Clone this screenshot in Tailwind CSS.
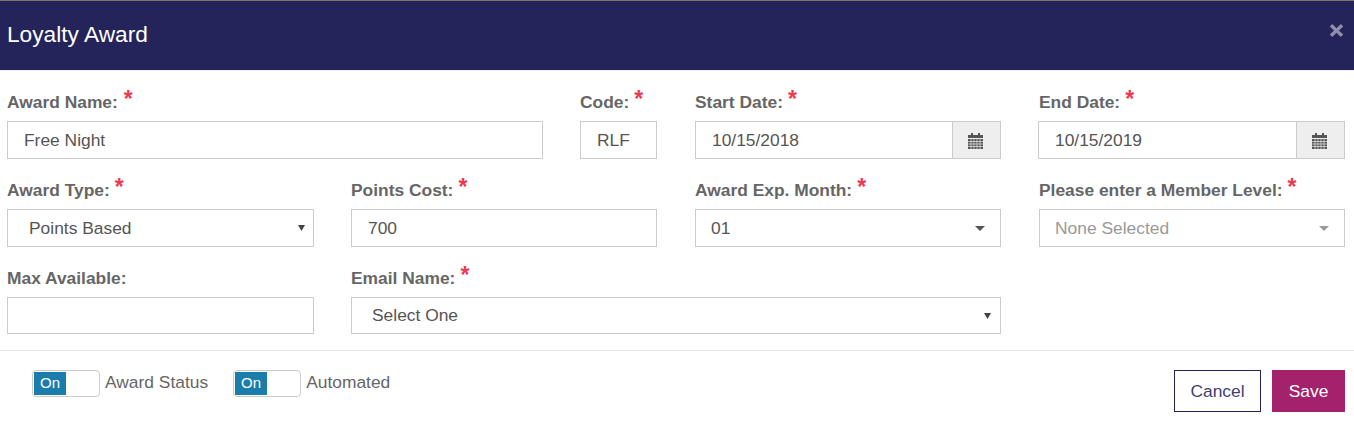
<!DOCTYPE html>
<html>
<head>
<meta charset="utf-8">
<script src="https://cdn.jsdelivr.net/npm/@tailwindcss/browser@4"></script>
</head>
<body class="bg-white font-['Liberation_Sans',Arial,sans-serif] text-[17.4px] text-[#666] overflow-hidden">
<div class="h-[421px] w-[1354px] flex flex-col">
  <div class="h-px bg-[#77776f] shrink-0"></div>
  <header class="h-[69px] shrink-0 bg-[#24245b] flex items-center justify-between pl-[7px] pr-[10px]">
    <h1 class="text-[22.7px] text-white leading-none -mt-[2px]">Loyalty Award</h1>
    <svg class="w-[15px] h-[15px] -mt-[10px]" viewBox="0 0 15 15"><path d="M3.2 1 7.5 5.2 11.8 1 14.2 3.4 9.9 7.5 14.2 11.6 11.8 14 7.5 9.8 3.2 14 .8 11.6 5.1 7.5.8 3.4Z" fill="#8f8fad"/></svg>
  </header>
  <div class="h-px bg-[#eeeeee] shrink-0"></div>

  <main class="px-[7px] shrink-0">
    <div class="flex h-[88px] pt-[19px]">
      <div class="w-[536px] mr-[37px]">
        <label class="flex h-[31px] font-bold leading-[24px]">Award Name:<span class="text-[#f0384f] text-[23px] leading-[20px] ml-[6px] -mt-px">*</span></label>
        <div class="h-[38px] border border-[#cccccc] pl-[16px] flex items-center text-[#555]">Free Night</div>
      </div>
      <div class="w-[77px] mr-[38px]">
        <label class="flex h-[31px] font-bold leading-[24px]">Code:<span class="text-[#f0384f] text-[23px] leading-[20px] ml-[5px] -mt-px">*</span></label>
        <div class="h-[38px] border border-[#cccccc] pl-[16px] flex items-center text-[#555]">RLF</div>
      </div>
      <div class="w-[306px] mr-[37px]">
        <label class="flex h-[31px] font-bold leading-[24px]">Start Date:<span class="text-[#f0384f] text-[23px] leading-[20px] ml-[5px] -mt-px">*</span></label>
        <div class="h-[38px] border border-[#cccccc] flex text-[#555]">
          <div class="flex-1 pl-[16px] flex items-center">10/15/2018</div>
          <div class="w-[48px] border-l border-[#cccccc] bg-[#eeeeee] flex items-center justify-center pr-[2px]">
            <svg class="w-[15px] h-[16px] mt-[2px]" viewBox="0 0 15 16"><path fill="#555" d="M0 2h3V0h2v2h5V0h2v2h3v3H0ZM0 6h15v10H0Z"/><path stroke="#eee" stroke-width=".7" d="M0 8.5h15M0 11h15M0 13.5h15M3 6v10M6 6v10M9 6v10M12 6v10"/></svg>
          </div>
        </div>
      </div>
      <div class="w-[307px]">
        <label class="flex h-[31px] font-bold leading-[24px] pl-px">End Date:<span class="text-[#f0384f] text-[23px] leading-[20px] ml-[5px] -mt-px">*</span></label>
        <div class="h-[38px] border border-[#cccccc] flex text-[#555]">
          <div class="flex-1 pl-[16px] flex items-center">10/15/2019</div>
          <div class="w-[48px] border-l border-[#cccccc] bg-[#eeeeee] flex items-center justify-center pr-[2px]">
            <svg class="w-[15px] h-[16px] mt-[2px]" viewBox="0 0 15 16"><path fill="#555" d="M0 2h3V0h2v2h5V0h2v2h3v3H0ZM0 6h15v10H0Z"/><path stroke="#eee" stroke-width=".7" d="M0 8.5h15M0 11h15M0 13.5h15M3 6v10M6 6v10M9 6v10M12 6v10"/></svg>
          </div>
        </div>
      </div>
    </div>

    <div class="flex h-[88px] pt-[19px]">
      <div class="w-[307px] mr-[37px]">
        <label class="flex h-[31px] font-bold leading-[24px]">Award Type:<span class="text-[#f0384f] text-[23px] leading-[20px] ml-[5px] -mt-px">*</span></label>
        <div class="h-[38px] border border-[#cccccc] pl-[21px] pr-[8px] flex items-center justify-between text-[#555]">Points Based<svg class="w-[7px] h-[6px]" viewBox="0 0 7 6"><path d="M0 0h7L3.5 6Z" fill="#444"/></svg></div>
      </div>
      <div class="w-[306px] mr-[38px]">
        <label class="flex h-[31px] font-bold leading-[24px]">Points Cost:<span class="text-[#f0384f] text-[23px] leading-[20px] ml-[5px] -mt-px">*</span></label>
        <div class="h-[38px] border border-[#cccccc] pl-[16px] flex items-center text-[#555]">700</div>
      </div>
      <div class="w-[306px] mr-[38px]">
        <label class="flex h-[31px] font-bold leading-[24px]">Award Exp. Month:<span class="text-[#f0384f] text-[23px] leading-[20px] ml-[5px] -mt-px">*</span></label>
        <div class="h-[38px] border border-[#cccccc] pl-[15px] pr-[15px] flex items-center justify-between text-[#555]">01<svg class="w-[10px] h-[5px]" viewBox="0 0 10 5"><path d="M0 0h10L5 5Z" fill="#555"/></svg></div>
      </div>
      <div class="w-[306px]">
        <label class="flex h-[31px] font-bold leading-[24px]">Please enter a Member Level:<span class="text-[#f0384f] text-[23px] leading-[20px] ml-[5px] -mt-px">*</span></label>
        <div class="h-[38px] border border-[#cccccc] pl-[15px] pr-[15px] flex items-center justify-between text-[#999]">None Selected<svg class="w-[10px] h-[5px]" viewBox="0 0 10 5"><path d="M0 0h10L5 5Z" fill="#999"/></svg></div>
      </div>
    </div>

    <div class="flex h-[104px] pt-[19px]">
      <div class="w-[307px] mr-[37px]">
        <label class="flex h-[31px] font-bold leading-[24px]">Max Available:</label>
        <div class="h-[37px] border border-[#cccccc]"></div>
      </div>
      <div class="w-[650px]">
        <label class="flex h-[31px] font-bold leading-[24px]">Email Name:<span class="text-[#f0384f] text-[23px] leading-[20px] ml-[5px] -mt-px">*</span></label>
        <div class="h-[37px] border border-[#cccccc] pl-[20px] pr-[9px] flex items-center justify-between text-[#555]">Select One<svg class="w-[7px] h-[6px]" viewBox="0 0 7 6"><path d="M0 0h7L3.5 6Z" fill="#444"/></svg></div>
      </div>
    </div>
  </main>

  <footer class="border-t border-[#e5e5e5] flex justify-between pl-[32px] pr-[9px] -mt-[1px]">
    <div class="flex pt-[19px]">
      <div class="flex items-start mr-[25px]">
        <div class="w-[68px] h-[27px] border border-[#cccccc] rounded-[4px] overflow-hidden flex p-px">
          <div class="w-[32px] bg-[#1a7dab] text-white text-[15px] flex items-center justify-center">On</div>
        </div>
        <span class="ml-[5px] leading-[24px]">Award Status</span>
      </div>
      <div class="flex items-start">
        <div class="w-[68px] h-[27px] border border-[#cccccc] rounded-[4px] overflow-hidden flex p-px">
          <div class="w-[32px] bg-[#1a7dab] text-white text-[15px] flex items-center justify-center">On</div>
        </div>
        <span class="ml-[5px] leading-[24px]">Automated</span>
      </div>
    </div>
    <div class="flex gap-[11px] pt-[19px]">
      <button class="w-[87px] h-[42px] border border-[#24245b] text-[#3f3f73] bg-white">Cancel</button>
      <button class="w-[73px] h-[42px] bg-[#a3226b] text-white font-medium">Save</button>
    </div>
  </footer>
</div>
</body>
</html>
